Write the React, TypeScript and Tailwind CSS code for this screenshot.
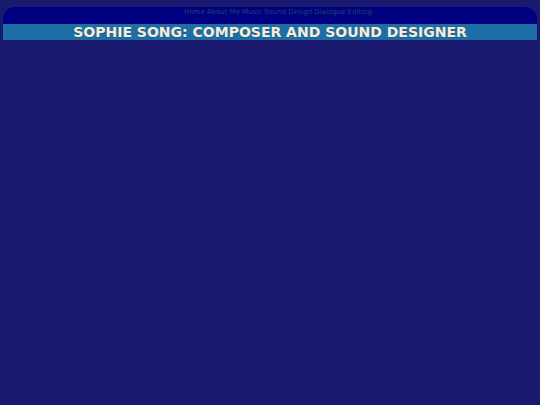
const links = [
  { href: "#home", label: "Home" },
  { href: "#about", label: "About Me" },
  { href: "#music", label: "Music" },
  { href: "#sound-design", label: "Sound Design" },
  { href: "#dialogue-editing", label: "Dialogue Editing" },
];

const App = () => {
  return (
    <div className="min-h-screen bg-[#191970] px-[3px] pt-[7px] font-['DejaVu_Sans',sans-serif]">
      <nav className="flex h-[17px] justify-center gap-[2px] rounded-t-xl bg-[#000080] pl-4 text-[7px] leading-[10px] text-[#1c4668]">
        {links.map((link) => (
          <a key={link.href} href={link.href}>
            {link.label}
          </a>
        ))}
      </nav>
      <header className="bg-[#1c6ea4]">
        <h1 className="text-center text-[14px] leading-4 font-bold text-[#faebd7] text-shadow-2xs">
          SOPHIE SONG: COMPOSER AND SOUND DESIGNER
        </h1>
      </header>
    </div>
  );
};

export default App;
